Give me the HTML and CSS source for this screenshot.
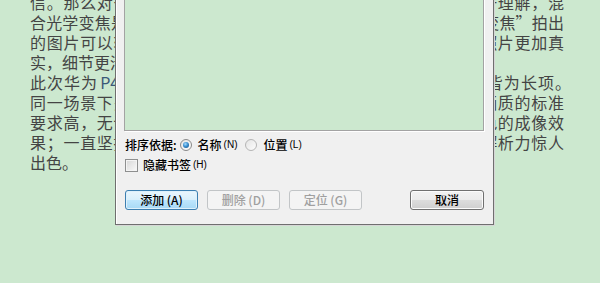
FILE: index.html
```html
<!DOCTYPE html>
<html lang="zh-CN">
<head>
    <meta charset="UTF-8">
    <meta name="viewport" content="width=device-width, initial-scale=1.0">
    <title>书签</title>
    <link rel="stylesheet" href="styles.css">
</head>
<body>
    <div class="article">
        <p class="line">信。那么对于普通用户来说，如何理解这些参数呢？其实很易于理解，混</p>
        <p class="line">合光学变焦是指将光学变焦与数码变焦相结合，通过“混合光学变焦”拍出</p>
        <p class="line">的图片可以轻松放大而不失真，与普通数码变焦相比其拍出的照片更加真</p>
        <p class="line short">实，细节更清晰，色彩也更加还原。</p>
        <p class="line">此次华为<span class="model">P40 Pro</span> 的影像能力，无论是夜拍、变焦还是人像，皆为长项<span class="end-punct">。</span></p>
        <p class="line">同一场景下多部手机同时拍摄，华为的成片总是出众，它对于画质的标准</p>
        <p class="line">要求高，无论是白天还是夜晚，它都能始终稳定地输出十分出色的成像效</p>
        <p class="line">果；一直坚持与徕卡联合调校色彩，在细节表现上同样不俗，解析力惊人</p>
        <p class="line short">出色。</p>
    </div>

    <div class="dialog">
        <div class="list"></div>
        <div class="sort-row">
            <span class="label">排序依据:</span>
            <span class="radio checked"></span>
            <span class="opt">名称</span><span class="key">(N)</span>
            <span class="radio"></span>
            <span class="opt">位置</span><span class="key">(L)</span>
        </div>
        <div class="check-row">
            <span class="checkbox"></span>
            <span class="opt">隐藏书签</span><span class="key">(H)</span>
        </div>
        <div class="buttons">
            <button class="btn default">添加 (A)</button>
            <button class="btn" disabled>删除 (D)</button>
            <button class="btn" disabled>定位 (G)</button>
            <button class="btn cancel">取消</button>
        </div>
    </div>
</body>
</html>
```

FILE: styles.css
```css
body {
    margin: 0;
    width: 600px;
    height: 283px;
    overflow: hidden;
    position: relative;
    background-color: #cce8cf;
    font-family: "Noto Sans CJK SC", "Noto Sans", sans-serif;
}
.article {
    margin-top: -8px;
    padding-left: 30px;
    color: #444;
    font-size: 16px;
}
.line {
    margin: 0;
    width: 534px;
    height: 20px;
    line-height: 20px;
    text-align: justify;
    text-align-last: justify;
}
.line.short {
    text-align-last: left;
}
.model {
    color: #3a5878;
    margin-left: 2px;
}
.end-punct {
    margin-right: -7px;
}
.dialog {
    position: absolute;
    left: 115px;
    top: -120px;
    width: 379px;
    height: 345px;
    box-sizing: border-box;
    display: flex;
    flex-direction: column;
    padding: 0 9px 14px 8px;
    background-color: #f0f0f0;
    border: 1px solid #6f6f6f;
    box-shadow: inset 1px 1px 0 #fff, 1px 1px 0 #d6d6d6;
    font-size: 12px;
    font-weight: 500;
    color: #000;
}
.list {
    flex: 1;
    background-color: #cce8cf;
    border: 1px solid #a3a3a3;
    box-shadow: 1px 1px 0 #fff;
}
.sort-row, .check-row {
    display: flex;
    align-items: center;
    height: 16px;
    line-height: 16px;
    padding-left: 1px;
}
.sort-row {
    margin-top: 6px;
}
.check-row {
    margin-top: 4px;
}
.key {
    font-family: "Liberation Sans", sans-serif;
    font-size: 10px;
    font-weight: normal;
    margin-left: 2px;
    margin-right: 8px;
}
.label {
    margin-right: 3px;
}
.opt {
    margin-left: 6px;
}
.radio {
    width: 12px;
    height: 12px;
    box-sizing: border-box;
    border-radius: 50%;
    border: 1px solid #b5b5b5;
    background: linear-gradient(135deg, #e4e4e4, #fdfdfd);
    position: relative;
}
.radio.checked {
    border-color: #8a8a8a;
}
.radio.checked::after {
    content: "";
    position: absolute;
    left: 2px;
    top: 2px;
    width: 6px;
    height: 6px;
    border-radius: 50%;
    background: radial-gradient(circle at 40% 35%, #a6dcff 0, #3a8fd0 45%, #11477a 100%);
}
.checkbox {
    width: 13px;
    height: 13px;
    box-sizing: border-box;
    border: 1px solid #8e8f8f;
    background: linear-gradient(135deg, #d6d6d6, #fafafa);
    box-shadow: inset 0 0 0 1px #f4f4f4;
}
.check-row .opt {
    margin-left: 5px;
}
.buttons {
    display: flex;
    gap: 9px;
    margin-top: 17px;
    padding-left: 1px;
}
.btn {
    width: 73px;
    height: 20px;
    padding: 0;
    border: 1px solid #707070;
    border-radius: 3px;
    background: linear-gradient(#f2f2f2 0%, #ebebeb 50%, #dddddd 51%, #cfcfcf 100%);
    box-shadow: inset 0 0 0 1px #fcfcfc;
    font-family: inherit;
    font-size: 12px;
    font-weight: 500;
    line-height: 18px;
    color: #000;
}
.btn.default {
    border-color: #3c7fb1;
    background: linear-gradient(#eaf6fd 0%, #d9f0fc 50%, #bee6fd 51%, #a7d9f5 100%);
    box-shadow: inset 0 0 0 1px #dff1fb;
}
.btn:disabled {
    border-color: #c2c5c7;
    background: #f4f4f4;
    box-shadow: none;
    color: #a0a0a0;
}
.btn.cancel {
    margin-left: auto;
    width: 74px;
}
```
